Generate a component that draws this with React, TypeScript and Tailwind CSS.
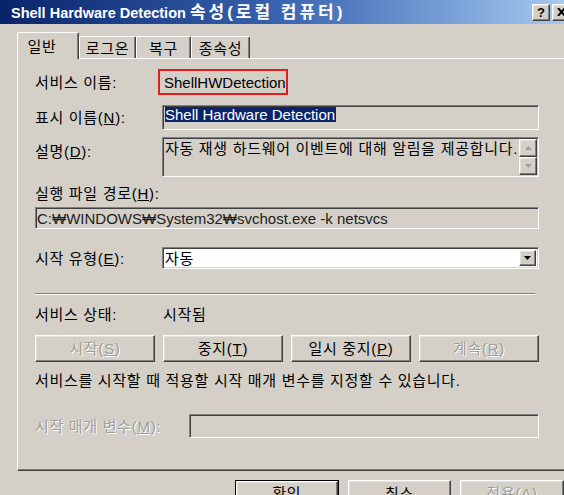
import React from "react";

const sunken =
  "border border-t-[#808080] border-l-[#808080] border-r-white border-b-white shadow-[inset_1px_1px_0_#404040,inset_-1px_-1px_0_#d4d0c8]";
const raised =
  "border border-t-white border-l-white border-r-[#404040] border-b-[#404040] shadow-[inset_-1px_-1px_0_#808080,inset_1px_1px_0_#e4e1da]";
const disabledText = "text-[#a09d98] [text-shadow:1px_1px_0_#ffffff]";
// hangul runs a touch wider than the fallback CJK face
const ko = "tracking-[0.7px]";

function Btn({
  children,
  disabled,
  className = "",
}: {
  children: React.ReactNode;
  disabled?: boolean;
  className?: string;
}) {
  return (
    <div
      className={`${raised} flex items-center justify-center bg-[#d4d0c8] ${ko} ${
        disabled ? disabledText : "text-black"
      } ${className}`}
    >
      {children}
    </div>
  );
}

function Tab({
  children,
  selected,
  width,
}: {
  children: React.ReactNode;
  selected?: boolean;
  width: string;
}) {
  return (
    <div
      className={`${width} ${
        selected ? "h-[27px] relative z-10 -mb-px bg-[#d4d0c8] pr-[12px]" : "h-[22px]"
      } flex items-center justify-center border-l border-t border-r border-l-white border-t-white border-r-[#404040] rounded-t-[2px] shadow-[inset_-1px_0_0_#808080] ${ko}`}
    >
      <span className={selected ? "mt-[1px]" : "mt-[2px]"}>{children}</span>
    </div>
  );
}

function Arrow({ dir, color }: { dir: "up" | "down"; color: string }) {
  return (
    <svg width="7" height="4" viewBox="0 0 7 4">
      {dir === "down" ? (
        <polygon points="0,0 7,0 3.5,4" fill={color} />
      ) : (
        <polygon points="0,4 7,4 3.5,0" fill={color} />
      )}
    </svg>
  );
}

export default function App() {
  return (
    <div className="w-[564px] h-[495px] overflow-hidden bg-[#d4d0c8] text-black text-[15px] leading-none font-['Liberation_Sans','Noto_Sans_CJK_KR',sans-serif]">
      {/* title bar */}
      <div className="h-[24px] flex items-center bg-linear-to-r from-[#0a246a] via-[#3a64b0] to-[#a6caf0] pl-[11px]">
        <span className="flex-1 text-white font-bold text-[14.5px] whitespace-nowrap">
          Shell Hardware Detection{" "}
          <span className="text-[17px] tracking-[3px]">속성(로컬 컴퓨터)</span>
        </span>
        <div className="flex gap-[2px] mr-[-6px]">
          <div
            className={`${raised} w-[18px] h-[17px] bg-[#d4d0c8] flex items-center justify-center text-[13px] font-bold`}
          >
            ?
          </div>
          <div
            className={`${raised} w-[18px] h-[17px] bg-[#d4d0c8] flex items-center justify-center`}
          >
            <svg width="9" height="8" viewBox="0 0 9 8">
              <path d="M1 0 L8 8 M8 0 L1 8" stroke="#000" strokeWidth="2" />
            </svg>
          </div>
        </div>
      </div>

      {/* tabs */}
      <div className="h-[34px] flex items-end pl-[17px]">
        <Tab selected width="w-[62px]">
          일반
        </Tab>
        <Tab width="w-[57px]">로그온</Tab>
        <Tab width="w-[55px]">복구</Tab>
        <Tab width="w-[59px]">종속성</Tab>
      </div>

      {/* general page */}
      <div className="ml-[17px] w-[560px] h-[413px] border-l border-t border-b border-l-white border-t-white border-b-[#404040] shadow-[inset_0_-1px_0_#808080] pl-[17px] flex flex-col">
        <div className="mt-[10px] h-[26px] flex items-center">
          <span className={`w-[123px] ${ko}`}>서비스 이름:</span>
          <div className="w-[130px] h-[26px] border-2 border-[#e41c1c] flex items-center pl-[4px]">
            ShellHWDetection
          </div>
        </div>

        <div className="mt-[10px] h-[25px] flex items-center">
          <span className={`w-[127px] ${ko}`}>
            표시 이름(<u>N</u>):
          </span>
          <div className={`${sunken} w-[377px] h-[25px] pl-[2px] pt-[1px] bg-[#d4d0c8]`}>
            <span className="inline-block bg-[#0a246a] text-white leading-[15px] pr-[1px]">
              Shell Hardware Detection
            </span>
          </div>
        </div>

        <div className="mt-[7px] h-[40px] flex items-start">
          <span className={`w-[127px] mt-[7px] ${ko}`}>
            설명(<u>D</u>):
          </span>
          <div className={`${sunken} w-[377px] h-[40px] bg-[#d4d0c8] flex`}>
            <span className={`flex-1 pl-[2px] pt-[3px] whitespace-nowrap ${ko}`}>
              자동 재생 하드웨어 이벤트에 대해 알림을 제공합니다.
            </span>
            <div className="flex flex-col mt-[1px] mr-[1px]">
              <div className={`${raised} w-[18px] h-[18px] flex items-center justify-center`}>
                <Arrow dir="up" color="#a09d98" />
              </div>
              <div className={`${raised} w-[18px] h-[18px] flex items-center justify-center`}>
                <Arrow dir="down" color="#a09d98" />
              </div>
            </div>
          </div>
        </div>

        <div className={`mt-[6px] h-[20px] flex items-center ${ko}`}>
          실행 파일 경로(<u>H</u>):
        </div>
        <div
          className={`${sunken} mt-[4px] w-[504px] h-[22px] bg-[#d4d0c8] flex items-center pl-[1px] text-[#202020] whitespace-nowrap`}
        >
          C:₩WINDOWS₩System32₩svchost.exe -k netsvcs
        </div>

        <div className="mt-[18px] h-[22px] flex items-center">
          <span className={`w-[127px] ${ko}`}>
            시작 유형(<u>E</u>):
          </span>
          <div className={`${sunken} w-[377px] h-[22px] bg-white flex items-center`}>
            <span className={`flex-1 pl-[2px] ${ko}`}>자동</span>
            <div
              className={`${raised} w-[17px] h-[16px] mr-[2px] bg-[#d4d0c8] flex items-center justify-center`}
            >
              <Arrow dir="down" color="#000" />
            </div>
          </div>
        </div>

        <div className="mt-[24px] w-[500px] h-[2px] border-t border-t-[#808080] border-b border-b-white" />

        <div className={`mt-[8px] h-[22px] flex items-center ${ko}`}>
          <span className="w-[128px]">서비스 상태:</span>
          <span>시작됨</span>
        </div>

        <div className="mt-[10px] flex gap-[8px]">
          <Btn disabled className="w-[120px] h-[27px]">
            시작(<u>S</u>)
          </Btn>
          <Btn className="w-[120px] h-[27px]">
            중지(<u>T</u>)
          </Btn>
          <Btn className="w-[120px] h-[27px]">
            일시 중지(<u>P</u>)
          </Btn>
          <Btn disabled className="w-[120px] h-[27px]">
            계속(<u>R</u>)
          </Btn>
        </div>

        <div className={`mt-[8px] h-[20px] flex items-center ${ko}`}>
          서비스를 시작할 때 적용할 시작 매개 변수를 지정할 수 있습니다.
        </div>

        <div className="mt-[24px] h-[24px] flex items-center">
          <span className={`w-[154px] ${disabledText} ${ko}`}>
            시작 매개 변수(<u>M</u>):
          </span>
          <div className={`${sunken} w-[350px] h-[24px] bg-[#d4d0c8]`} />
        </div>
      </div>

      {/* dialog buttons */}
      <div className="mt-[9px] ml-[235px] flex gap-[9px]">
        <div className="w-[105px] h-[27px] border border-black">
          <Btn className="w-full h-full">확인</Btn>
        </div>
        <Btn className="w-[105px] h-[27px]">취소</Btn>
        <Btn disabled className="w-[105px] h-[27px]">
          적용(<u>A</u>)
        </Btn>
      </div>
    </div>
  );
}
